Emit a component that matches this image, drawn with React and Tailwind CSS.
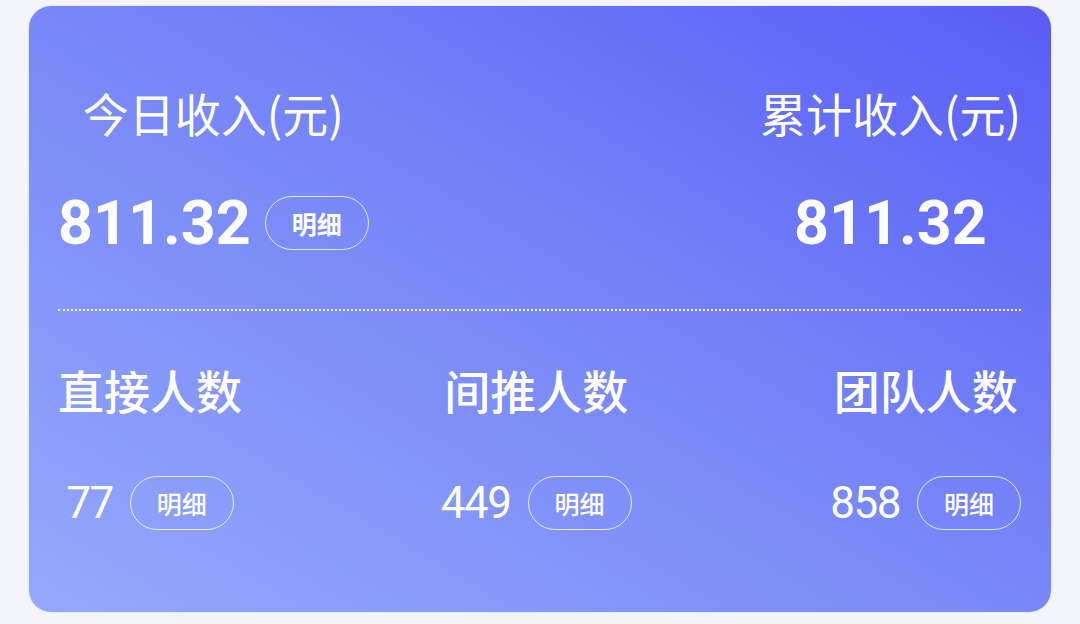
import React from 'react';

const cjk = { fontFamily: '"Noto Sans CJK SC", "Noto Sans", sans-serif' };
const num = { fontFamily: 'Roboto, "Noto Sans", sans-serif' };

const DetailPill = ({ bold }) => (
  <span
    style={cjk}
    className={`flex items-center justify-center w-[104px] h-[54px] rounded-full border border-white/80 text-white text-[25px] leading-none ${bold ? 'font-bold' : 'font-medium'}`}
  >
    明细
  </span>
);

const counts = [
  { label: '直接人数', value: '77' },
  { label: '间推人数', value: '449' },
  { label: '团队人数', value: '858' },
];

export default function App() {
  return (
    <div className="w-[1080px] h-[624px] bg-[#f4f5fa] pt-[6px] pl-[29px]">
      <div className="w-[1022px] h-[606px] rounded-[22px] bg-linear-to-tr from-[#95a9fb] via-[#7888f8] to-[#5a5bf6] shadow-[0_0_2px_rgba(0,0,0,0.15)] pl-[29px] pr-[30px] pt-[84px] text-white">
        {/* income */}
        <div className="flex justify-between">
          <div className="flex flex-col items-center">
            <div style={cjk} className="h-[44px] flex items-center text-[46px] leading-none font-normal">今日收入(元)</div>
            <div className="mt-[62px] h-[54px] flex items-center gap-[14px]">
              <span style={num} className="text-[61px] leading-none font-bold">811.32</span>
              <DetailPill bold />
            </div>
          </div>
          <div className="flex flex-col items-center">
            <div style={cjk} className="h-[44px] flex items-center text-[46px] leading-none font-normal">累计收入(元)</div>
            <div className="mt-[62px] h-[54px] flex items-center">
              <span style={num} className="text-[61px] leading-none font-bold">811.32</span>
            </div>
          </div>
        </div>

        <div className="mt-[59px] border-t-2 border-dotted border-white/90" />

        {/* people */}
        <div className="mt-[56px] flex justify-between">
          {counts.map((c) => (
            <div key={c.label} className="flex flex-col items-center">
              <div style={cjk} className="h-[44px] flex items-center text-[46px] leading-none font-medium">{c.label}</div>
              <div className="mt-[65px] h-[54px] flex items-center gap-[17px]">
                <span style={num} className="text-[44px] leading-none font-normal tracking-[-1.5px]">{c.value}</span>
                <DetailPill />
              </div>
            </div>
          ))}
        </div>
      </div>
    </div>
  );
}
